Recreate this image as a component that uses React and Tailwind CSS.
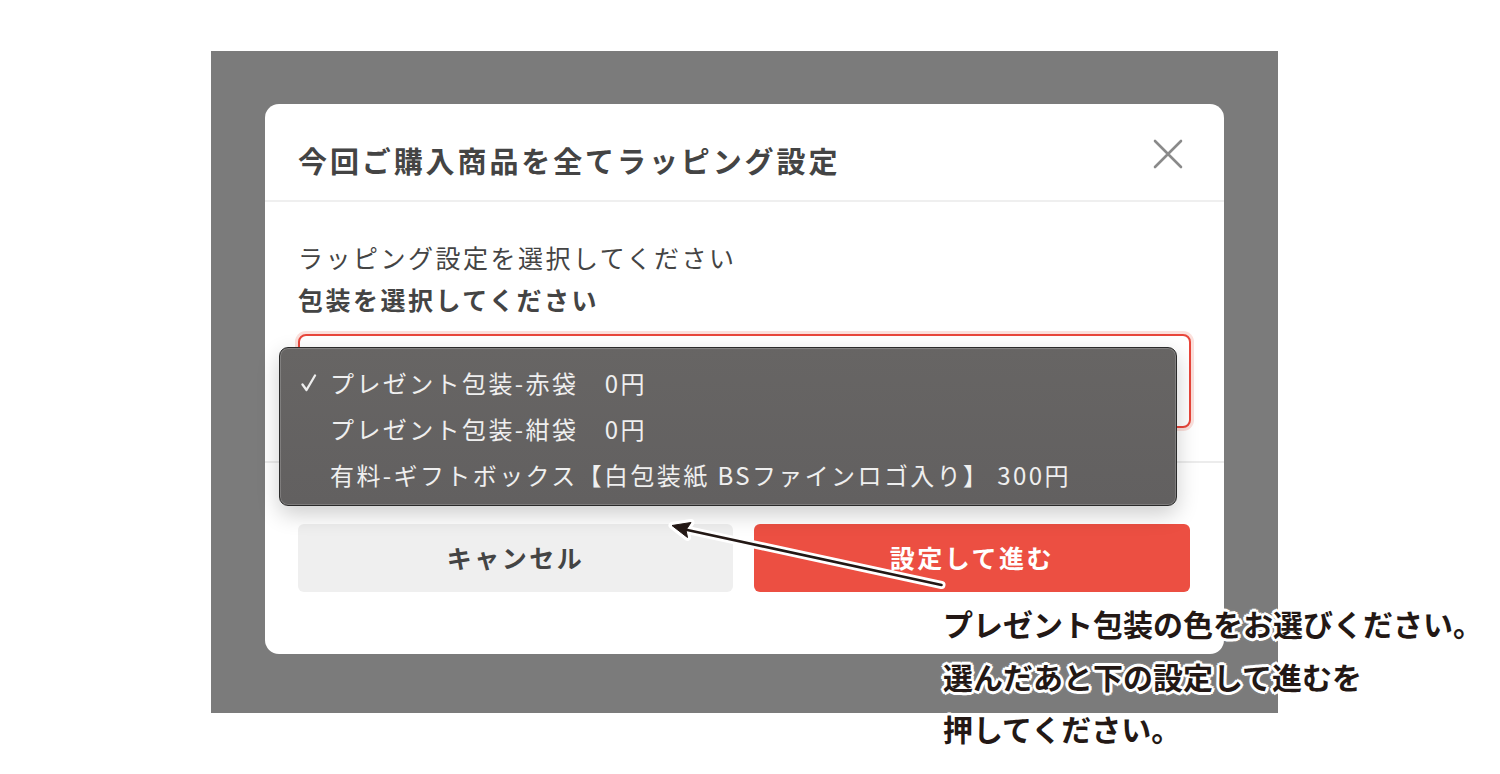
import React from 'react';

const options = [
  { label: 'プレゼント包装-赤袋　0円', checked: true },
  { label: 'プレゼント包装-紺袋　0円', checked: false },
  { label: '有料-ギフトボックス【白包装紙 BSファインロゴ入り】 300円', checked: false },
];

const CloseIcon = () => (
  <svg width="30" height="30" viewBox="0 0 30 30" fill="none">
    <path d="M2 2 L28 28 M28 2 L2 28" stroke="#8a8a8a" strokeWidth="2.6" strokeLinecap="round" />
  </svg>
);

const CheckIcon = () => (
  <svg width="16" height="18" viewBox="0 0 16 18" fill="none">
    <path d="M1.5 10.5 L5.5 16 L14 1.5" stroke="#eeeeee" strokeWidth="2.3" strokeLinecap="round" strokeLinejoin="round" />
  </svg>
);

const Dropdown = () => (
  <div className="absolute left-[-21px] top-[11px] w-[898px] h-[159px] rounded-[9px] border border-[#2a2a2a] bg-gradient-to-b from-[#676564] to-[#626060] shadow-[inset_0_0_0_1px_rgba(255,255,255,0.18),0_8px_22px_rgba(0,0,0,0.2)] pt-[12px] pb-[7px]">
    {options.map((opt) => (
      <div key={opt.label} className="flex items-center h-[46px] pl-[21px]">
        <span className="w-[29px] flex items-center">{opt.checked && <CheckIcon />}</span>
        <span className="text-[24px] tracking-[0.1em] text-[#efefef] whitespace-pre">{opt.label}</span>
      </div>
    ))}
  </div>
);

const Arrow = () => (
  <svg className="absolute left-0 top-0 pointer-events-none" width="1500" height="774" viewBox="0 0 1500 774">
    {/* white outline */}
    <line x1="941.5" y1="585" x2="685" y2="529.5" stroke="#ffffff" strokeWidth="8" strokeLinecap="round" />
    <polygon points="672,525.5 691,522.5 686,530 687.5,537.5" fill="#ffffff" stroke="#ffffff" strokeWidth="7" strokeLinejoin="round" />
    {/* black arrow */}
    <line x1="941.5" y1="585" x2="685" y2="529.5" stroke="#231815" strokeWidth="2.6" strokeLinecap="round" />
    <polygon points="672,525.5 691,522.5 686,530 687.5,537.5" fill="#231815" stroke="#231815" strokeWidth="1" strokeLinejoin="round" />
  </svg>
);

const App = () => {
  return (
    <div className="relative w-[1500px] h-[774px] bg-white overflow-hidden font-['Noto_Sans_CJK_JP','Noto_Sans',sans-serif]">
      <div className="pt-[51px] pl-[211px]">
        {/* Backdrop */}
        <div className="w-[1067px] h-[662px] bg-[#7b7b7b] pt-[53px] pl-[54px]">
          {/* Modal */}
          <div className="w-[959px] h-[550px] bg-white rounded-[14px] flex flex-col">
            {/* Header */}
            <div className="h-[98px] border-b-2 border-[#efefef] flex items-center justify-between pl-[33px] pr-[41px]">
              <h2 className="pt-[16px] text-[29px] leading-[40px] font-bold tracking-[0.1em] text-[#444444]">
                今回ご購入商品を全てラッピング設定
              </h2>
              <button className="mt-[4px]">
                <CloseIcon />
              </button>
            </div>

            {/* Body */}
            <div className="px-[33px] pt-[34px] pb-[33px] border-b-2 border-[#ececec]">
              <p className="text-[25px] leading-[42px] tracking-[0.1em] text-[#444444]">
                ラッピング設定を選択してください
              </p>
              <p className="text-[25px] leading-[42px] font-bold tracking-[0.1em] text-[#444444]">
                包装を選択してください
              </p>
              <div className="relative mt-[14px] h-[94px] rounded-[8px] border-2 border-[#e8463b] ring-[3px] ring-[#fbe0dc] bg-white">
                <Dropdown />
              </div>
            </div>

            {/* Footer */}
            <div className="flex gap-[21px] px-[33px] pt-[61px]">
              <button className="w-[435px] h-[68px] rounded-[6px] bg-[#efefef] text-[25px] font-bold tracking-[0.1em] text-[#444444]">
                キャンセル
              </button>
              <button className="w-[436px] h-[68px] rounded-[6px] bg-[#ec4f42] text-[25px] font-bold tracking-[0.1em] text-white">
                設定して進む
              </button>
            </div>
          </div>
        </div>
      </div>

      <Arrow />

      {/* Annotation */}
      <div className="absolute left-[943px] top-[597px] text-[30px] leading-[52.5px] font-bold text-[#231815] whitespace-nowrap [text-shadow:3px_0_0_#fff,-3px_0_0_#fff,0_3px_0_#fff,0_-3px_0_#fff,2px_2px_0_#fff,-2px_-2px_0_#fff,2px_-2px_0_#fff,-2px_2px_0_#fff,0_0_4px_#fff]">
        <p>プレゼント包装の色をお選びください。</p>
        <p>選んだあと下の設定して進むを</p>
        <p>押してください。</p>
      </div>
    </div>
  );
};

export default App;
